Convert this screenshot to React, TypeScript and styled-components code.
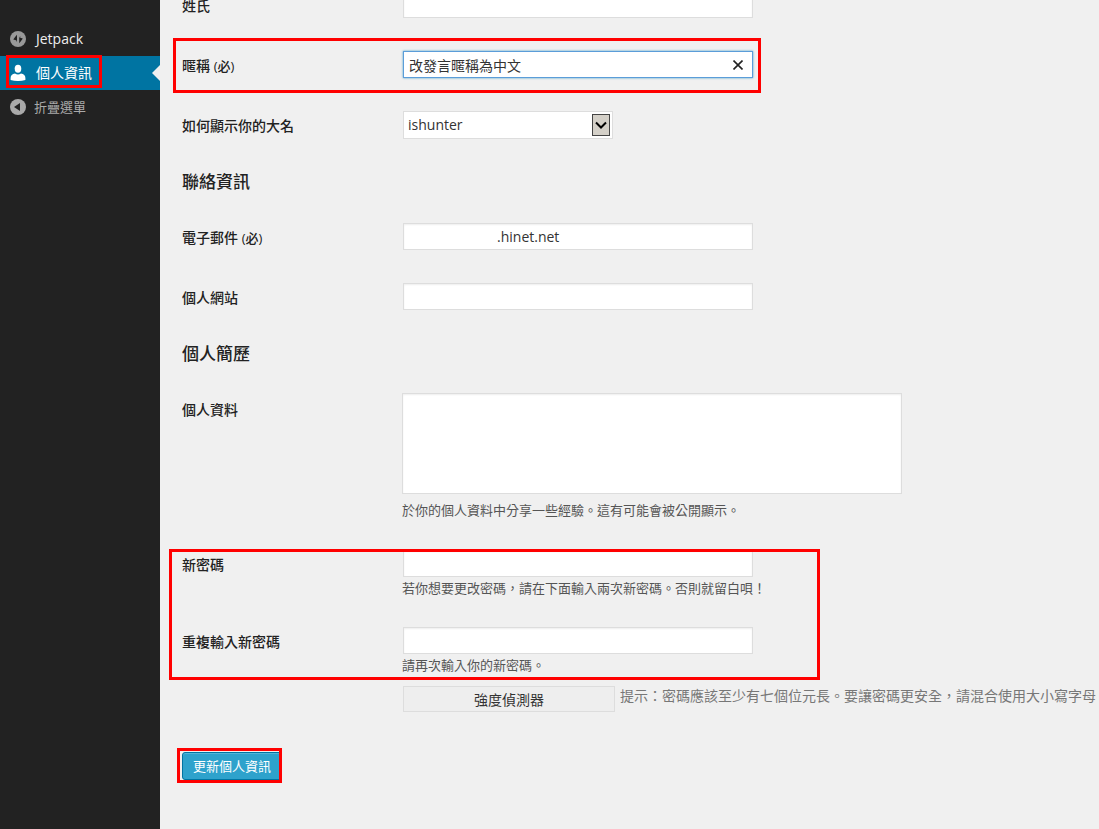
import React from 'react';
import styled, { createGlobalStyle } from 'styled-components';

const GlobalStyle = createGlobalStyle`
  *, *::before, *::after { box-sizing: border-box; }
  body {
    margin: 0;
    background: #f0f0f0;
    color: #333;
    font-family: "Open Sans", "Noto Sans CJK TC", sans-serif;
    font-size: 14px;
    line-height: 18px;
  }
  button, input, select, textarea { font: inherit; color: inherit; }
`;

const Page = styled.div`
  display: flex;
  min-height: 100vh;
`;

const Sidebar = styled.nav`
  flex: 0 0 160px;
  padding-top: 22px;
  background: #222;
`;

const Menu = styled.ul`
  list-style: none;
  margin: 0;
  padding: 0;
`;

const MenuItem = styled.li`
  position: relative;
`;

const MenuLink = styled.a<{ $active?: boolean }>`
  display: flex;
  align-items: center;
  gap: 8px;
  height: 34px;
  padding-left: 8px;
  color: ${(p) => (p.$active ? '#fff' : '#eee')};
  background: ${(p) => (p.$active ? '#0074a2' : 'transparent')};
  text-decoration: none;

  svg { fill: ${(p) => (p.$active ? '#fff' : '#999')}; }

  &::after {
    content: ${(p) => (p.$active ? '""' : 'none')};
    position: absolute;
    right: 0;
    top: 9px;
    border: 8px solid transparent;
    border-left: 0;
    border-right-color: #f0f0f0;
  }
`;

const CollapseButton = styled.button`
  display: flex;
  align-items: center;
  gap: 6px;
  width: 100%;
  height: 34px;
  padding: 0 0 0 8px;
  border: 0;
  background: none;
  color: #aaa;
  font-size: 13px;
  cursor: pointer;

  svg { fill: #aaa; }
`;

const Main = styled.main`
  flex: 1;
  min-width: 0;
  overflow: hidden;
  padding-left: 22px;
`;

/* The form is shown scrolled, with its first row partly above the window. */
const Form = styled.form`
  margin-top: -25px;
`;

const Row = styled.div`
  position: relative;
  display: grid;
  grid-template-columns: 220px minmax(0, 1fr);
  min-height: 60px;
`;

const Label = styled.label`
  padding-top: 22px;
  color: #222;
  font-weight: 500;
`;

const Required = styled.span`
  font-size: 13px;
`;

const Field = styled.div<{ $area?: boolean }>`
  padding: ${(p) => (p.$area ? '14px 0 15px' : '16px 0 14px')};
`;

const SectionTitle = styled.h3`
  height: 52px;
  margin: 0;
  padding-top: 16px;
  color: #222;
  font-size: 17px;
  font-weight: 500;
  line-height: 22px;
`;

const Input = styled.input<{ $focused?: boolean; $indent?: number }>`
  display: block;
  width: 350px;
  max-width: 100%;
  height: 27px;
  margin-left: 1px;
  padding: 0 5px 0 ${(p) => p.$indent ?? 5}px;
  border: 1px solid ${(p) => (p.$focused ? '#5b9dd9' : '#ddd')};
  border-radius: 0;
  outline: none;
  background: #fff;
  box-shadow: ${(p) =>
    p.$focused ? '0 0 2px rgba(30, 140, 190, 0.8)' : 'inset 0 1px 2px rgba(0, 0, 0, 0.07)'};
`;

const ClearableInput = styled.div`
  position: relative;
  width: 351px;
  max-width: 100%;
`;

const ClearButton = styled.button`
  position: absolute;
  top: 4px;
  right: 5px;
  display: flex;
  align-items: center;
  justify-content: center;
  width: 20px;
  height: 20px;
  padding: 0;
  border: 0;
  background: none;
`;

const SelectBox = styled.div`
  position: relative;
  width: 210px;
  margin-left: 1px;
`;

const Select = styled.select`
  appearance: none;
  display: block;
  width: 100%;
  height: 28px;
  padding: 0 24px 0 4px;
  border: 1px solid #ddd;
  border-radius: 0;
  background: #fff;
`;

const SelectArrow = styled.span`
  position: absolute;
  top: 3px;
  right: 3px;
  display: flex;
  align-items: center;
  justify-content: center;
  width: 18px;
  height: 22px;
  border: 1px solid #444;
  background: #d4d0c8;
  pointer-events: none;
`;

const TextArea = styled.textarea`
  display: block;
  width: 500px;
  max-width: 100%;
  height: 101px;
  padding: 2px 6px;
  border: 1px solid #ddd;
  border-radius: 0;
  background: #fff;
  box-shadow: inset 0 1px 2px rgba(0, 0, 0, 0.07);
  resize: none;
`;

const Description = styled.p<{ $spaced?: boolean }>`
  margin: ${(p) => (p.$spaced ? 7 : 2)}px 0 0;
  color: #555;
  font-size: 13px;
`;

const StrengthLine = styled.div`
  display: flex;
  gap: 5px;
  margin: 12px 0 0 1px;
`;

const StrengthMeter = styled.div`
  flex: 0 0 212px;
  height: 26px;
  border: 1px solid #ddd;
  background: #eee;
  line-height: 26px;
  text-align: center;
`;

const Hint = styled.span`
  padding-top: 1px;
  color: #777;
  white-space: nowrap;
`;

const SubmitLine = styled.div`
  position: relative;
  display: flex;
  margin-top: 26px;
`;

const SubmitButton = styled.button`
  height: 28px;
  padding: 0 10px;
  border: 1px solid #0074a2;
  border-radius: 3px;
  background: #2ea2cc;
  box-shadow: inset 0 1px 0 rgba(120, 200, 230, 0.5);
  color: #fff;
  font-size: 13px;
  cursor: pointer;
`;

const Highlight = styled.span<{ $x: number; $y: number; $w: number; $h: number }>`
  position: absolute;
  left: ${(p) => p.$x}px;
  top: ${(p) => p.$y}px;
  width: ${(p) => p.$w}px;
  height: ${(p) => p.$h}px;
  border: 3px solid #f00;
  pointer-events: none;
  z-index: 1;
`;

const JetpackIcon = () => (
  <svg width="20" height="20" viewBox="0 0 20 20" aria-hidden="true">
    <circle cx="10" cy="10" r="8" />
    <path d="M9 5.8V11l-1 2V11.200L5.300 10.600Q5.600 9.800 9 5.800zM11.200 14.200V9l1-2v1.800l2.600.6Q14.500 10.200 11.200 14.200z" fill="#222" />
  </svg>
);

const UserIcon = () => (
  <svg width="20" height="20" viewBox="0 0 20 20" aria-hidden="true">
    <ellipse cx="10" cy="5.800" rx="3.300" ry="4" />
    <path d="M7 10.400Q10 12.600 13 10.400C15.800 10.800 17.400 12.400 17.400 15V17Q14 18.100 10 18.100T2.600 17V15C2.600 12.400 4.200 10.800 7 10.400z" />
  </svg>
);

const CollapseIcon = () => (
  <svg width="20" height="20" viewBox="0 0 20 20" aria-hidden="true">
    <circle cx="10" cy="10" r="8" />
    <path d="M12 6v8L6 10z" fill="#222" />
  </svg>
);

export default function App() {
  return (
    <>
      <GlobalStyle />
      <Page>
        <Sidebar>
          <Menu>
            <MenuItem>
              <MenuLink href="#jetpack"><JetpackIcon />Jetpack</MenuLink>
            </MenuItem>
            <MenuItem>
              <MenuLink href="#profile" $active><UserIcon />個人資訊</MenuLink>
              <Highlight $x={6} $y={-1} $w={96} $h={33} />
            </MenuItem>
            <MenuItem>
              <CollapseButton type="button"><CollapseIcon />折疊選單</CollapseButton>
            </MenuItem>
          </Menu>
        </Sidebar>
        <Main>
          <Form>
            <Row>
              <Label htmlFor="last-name">姓氏</Label>
              <Field><Input id="last-name" type="text" /></Field>
            </Row>
            <Row>
              <Label htmlFor="nickname">暱稱 <Required>(必)</Required></Label>
              <Field>
                <ClearableInput>
                  <Input id="nickname" type="text" defaultValue="改發言暱稱為中文" $focused />
                  <ClearButton type="button" aria-label="清除">
                    <svg width="10" height="10" viewBox="0 0 10 10" aria-hidden="true">
                      <path d="M0.500 0.500l9 9M9.500 0.500l-9 9" stroke="#222" strokeWidth="1.600" />
                    </svg>
                  </ClearButton>
                </ClearableInput>
              </Field>
              <Highlight $x={-9} $y={3} $w={588} $h={55} />
            </Row>
            <Row>
              <Label htmlFor="display-name">如何顯示你的大名</Label>
              <Field>
                <SelectBox>
                  <Select id="display-name" defaultValue="ishunter">
                    <option value="ishunter">ishunter</option>
                  </Select>
                  <SelectArrow>
                    <svg width="12" height="8" viewBox="0 0 12 8" aria-hidden="true">
                      <path d="M1 1.500l5 5 5-5" fill="none" stroke="#000" strokeWidth="2" />
                    </svg>
                  </SelectArrow>
                </SelectBox>
              </Field>
            </Row>

            <SectionTitle>聯絡資訊</SectionTitle>
            <Row>
              <Label htmlFor="email">電子郵件 <Required>(必)</Required></Label>
              <Field><Input id="email" type="text" defaultValue=".hinet.net" $indent={93} /></Field>
            </Row>
            <Row>
              <Label htmlFor="website">個人網站</Label>
              <Field><Input id="website" type="text" /></Field>
            </Row>

            <SectionTitle>個人簡歷</SectionTitle>
            <Row>
              <Label htmlFor="bio">個人資料</Label>
              <Field $area>
                <TextArea id="bio" />
                <Description $spaced>於你的個人資料中分享一些經驗。這有可能會被公開顯示。</Description>
              </Field>
            </Row>
            <Row>
              <Label htmlFor="password">新密碼</Label>
              <Field>
                <Input id="password" type="password" />
                <Description>若你想要更改密碼，請在下面輸入兩次新密碼。否則就留白唄！</Description>
              </Field>
              <Highlight $x={-13} $y={15} $w={651} $h={131} />
            </Row>
            <Row>
              <Label htmlFor="password-repeat">重複輸入新密碼</Label>
              <Field>
                <Input id="password-repeat" type="password" />
                <Description>請再次輸入你的新密碼。</Description>
                <StrengthLine>
                  <StrengthMeter>強度偵測器</StrengthMeter>
                  <Hint>提示：密碼應該至少有七個位元長。要讓密碼更安全，請混合使用大小寫字母</Hint>
                </StrengthLine>
              </Field>
            </Row>

            <SubmitLine>
              <SubmitButton type="button">更新個人資訊</SubmitButton>
              <Highlight $x={-5} $y={-4} $w={105} $h={35} />
            </SubmitLine>
          </Form>
        </Main>
      </Page>
    </>
  );
}
